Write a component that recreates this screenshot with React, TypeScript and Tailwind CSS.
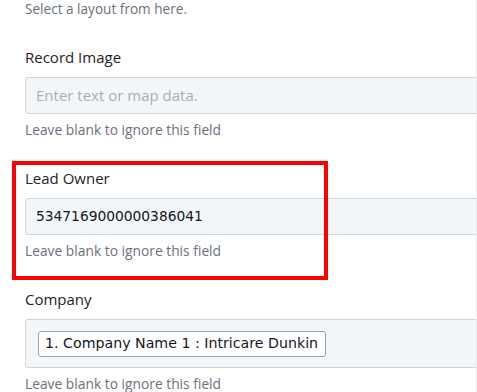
export default function App() {
  const hint = "Leave blank to ignore this field";

  return (
    <div className="w-[477px] h-[392px] overflow-hidden bg-white relative font-['Open_Sans',sans-serif]">
      <div className="absolute top-0 bottom-0 left-[476px] w-px bg-[#e9ecef]" />
      <div className="pl-[25px] w-[520px]">
        <p className="text-[13.6px] leading-[18px] text-[#6b7280]">Select a layout from here.</p>

        {/* Record Image */}
        <div className="mt-[29px]">
          <label className="block text-[15px] leading-[20px] text-[#1f2328]">Record Image</label>
          <div className="mt-[10px] h-[37px] rounded-[3px] border border-[#cfd4da] bg-[#f3f6f9] flex items-center pl-[10px]">
            <span className="text-[15px] text-[#a9aeb4]">Enter text or map data.</span>
          </div>
          <p className="mt-[7px] text-[13.8px] leading-[18px] text-[#6b7280]">{hint}</p>
        </div>

        {/* Lead Owner */}
        <div className="mt-[29px]">
          <label className="block text-[15px] leading-[20px] text-[#1f2328]">Lead Owner</label>
          <div className="mt-[10px] h-[37px] rounded-[3px] border border-[#cfd4da] bg-[#f3f6f9] flex items-center pl-[10px]">
            <span className="text-[13.8px] text-[#111827] font-['DejaVu_Sans',sans-serif]">5347169000000386041</span>
          </div>
          <p className="mt-[7px] text-[13.8px] leading-[18px] text-[#6b7280]">{hint}</p>
        </div>

        {/* Company */}
        <div className="mt-[29px]">
          <label className="block text-[15px] leading-[20px] text-[#1f2328]">Company</label>
          <div className="mt-[10px] h-[49px] rounded-[3px] border border-[#cfd4da] bg-[#f3f6f9] flex items-center pl-[12px]">
            <span className="h-[26px] flex items-center pl-[6px] pr-[7px] rounded-[3px] border border-[#9ca3af] bg-white text-[14.2px] text-[#111827] font-['DejaVu_Sans',sans-serif]">
              1. Company Name 1 : Intricare Dunkin
            </span>
          </div>
          <p className="mt-[7px] text-[13.8px] leading-[18px] text-[#6b7280]">{hint}</p>
        </div>
      </div>

      {/* highlight box */}
      <div className="absolute left-[12px] top-[161px] w-[316px] h-[119px] border-4 border-[#ff0000]" />
    </div>
  );
}
